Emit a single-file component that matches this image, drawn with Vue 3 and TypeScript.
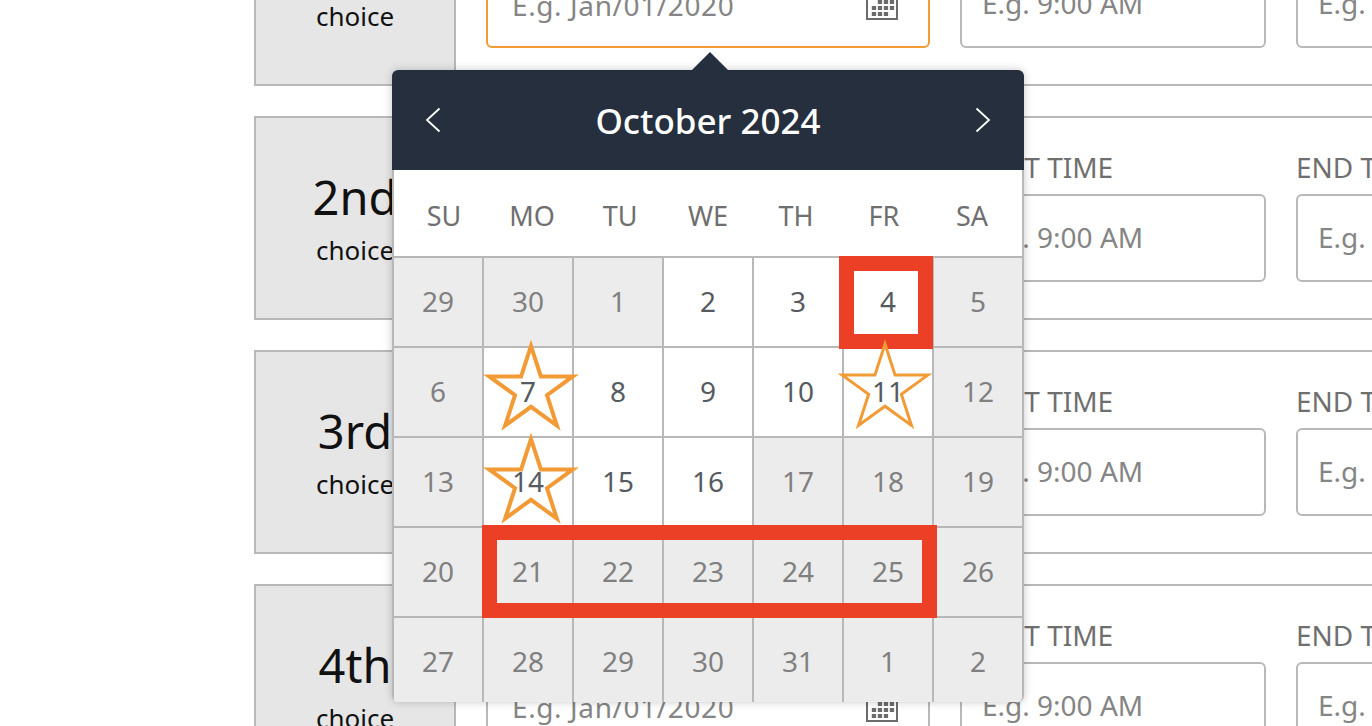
<script setup lang="ts">
interface Choice { rank: string; focused: boolean }
interface Day { n: number; active: boolean }

const choices: Choice[] = [
  { rank: '1st', focused: true },
  { rank: '2nd', focused: false },
  { rank: '3rd', focused: false },
  { rank: '4th', focused: false },
]
const weekdays = ['SU', 'MO', 'TU', 'WE', 'TH', 'FR', 'SA']
const nums = [29, 30, 1, 2, 3, 4, 5, 6, 7, 8, 9, 10, 11, 12, 13, 14, 15, 16, 17, 18, 19, 20, 21, 22, 23, 24, 25, 26, 27, 28, 29, 30, 31, 1, 2]
const activeIdx = new Set([3, 4, 5, 8, 9, 10, 11, 12, 15, 16, 17])
const days: Day[] = nums.map((n, i) => ({ n, active: activeIdx.has(i) }))

function starPoints(cx: number, cy: number, r: number): string {
  const pts: string[] = []
  for (let i = 0; i < 10; i++) {
    const rad = i % 2 === 0 ? r : r * 0.382
    const a = -Math.PI / 2 + (i * Math.PI) / 5
    pts.push(`${(cx + rad * Math.cos(a)).toFixed(2)},${(cy + rad * Math.sin(a)).toFixed(2)}`)
  }
  return pts.join(' ')
}
const stars = [
  { cls: 's7', w: 4, pts: starPoints(50, 50, 44) },
  { cls: 's11', w: 3, pts: starPoints(50, 50, 45) },
  { cls: 's14', w: 4, pts: starPoints(50, 50, 44) },
]
const cal: { x: number; y: number }[] = []
for (let r = 0; r < 3; r++) for (let c = 0; c < 4; c++) {
  if (r === 0 && c === 0) continue
  if (r === 2 && c === 3) continue
  cal.push({ x: 5.8 + c * 6, y: 12 + r * 6 })
}
</script>

<template>
  <div class="page">
    <div class="rows">
      <section v-for="c in choices" :key="c.rank" class="row">
        <div class="rank">
          <div class="rank-num">{{ c.rank }}</div>
          <div class="rank-sub">choice</div>
        </div>
        <div class="fields">
          <div class="field date">
            <div class="label">DATE</div>
            <div class="input date-input" :class="{ focused: c.focused }">
              <span>E.g. Jan/01/2020</span>
              <svg class="cal" width="32" height="32" viewBox="0 0 32 32">
                <path d="M1 4v27h30V4" fill="none" stroke="#6b6b6b" stroke-width="2" />
                <rect x="0" y="0" width="32" height="8" fill="#6b6b6b" />
                <rect v-for="(p, i) in cal" :key="i" :x="p.x" :y="p.y" width="4.3" height="4" fill="#6b6b6b" />
              </svg>
            </div>
          </div>
          <div class="field time">
            <div class="label">START TIME</div>
            <div class="input"><span>E.g. 9:00 AM</span></div>
          </div>
          <div class="field time">
            <div class="label">END TIME</div>
            <div class="input"><span>E.g. 9:00 AM</span></div>
          </div>
        </div>
      </section>
    </div>

    <div class="popup">
      <div class="arrow"></div>
      <header class="head">
        <svg class="chev" width="16" height="26" viewBox="0 0 16 26"><path d="M14.5 1.5 2 13l12.5 11.5" fill="none" stroke="#fff" stroke-width="1.8" /></svg>
        <div class="month">October 2024</div>
        <svg class="chev" width="16" height="26" viewBox="0 0 16 26"><path d="M1.5 1.5 14 13 1.5 24.5" fill="none" stroke="#fff" stroke-width="1.8" /></svg>
      </header>
      <div class="weekdays">
        <div v-for="w in weekdays" :key="w" class="wd">{{ w }}</div>
      </div>
      <div class="grid">
        <div v-for="(d, i) in days" :key="i" class="cell" :class="{ on: d.active }">{{ d.n }}</div>
      </div>
      <div class="mark mark-day"></div>
      <div class="mark mark-week"></div>
      <svg v-for="s in stars" :key="s.cls" class="star" :class="s.cls" width="100" height="100" viewBox="0 0 100 100">
        <polygon :points="s.pts" fill="none" stroke="#f29a35" :stroke-width="s.w" stroke-miterlimit="10" />
      </svg>
    </div>
  </div>
</template>

<style>
html, body { margin: 0; background: #fff; }
</style>

<style scoped>
.page {
  position: relative;
  width: 1372px;
  height: 726px;
  overflow: hidden;
  background: #fff;
  font-family: "Noto Sans", "Liberation Sans", sans-serif;
}
.rows {
  display: flex;
  flex-direction: column;
  gap: 30px;
  margin-top: -118px;
  padding-left: 254px;
  width: 1300px;
}
.row {
  display: flex;
  height: 204px;
  box-sizing: border-box;
  border-top: 2px solid #b8b8b8;
  border-bottom: 2px solid #b8b8b8;
}
.rank {
  box-sizing: border-box;
  flex: none;
  width: 202px;
  margin-top: -2px;
  margin-bottom: -2px;
  background: #e6e6e6;
  border: 2px solid #b8b8b8;
  display: flex;
  flex-direction: column;
  align-items: center;
  padding-top: 46px;
  color: #111;
}
.rank-num { font-size: 47px; line-height: 66px; }
.rank-sub { font-size: 26px; line-height: 36px; margin-top: 2px; }
.fields { display: flex; flex: none; gap: 30px; padding-left: 30px; }
.field { padding-top: 34px; flex: none; }
.date { width: 444px; }
.time { width: 306px; }
.label {
  height: 32px;
  line-height: 30px;
  margin-bottom: 10px;
  font-size: 28px;
  color: #6f6f6f;
  white-space: nowrap;
}
.input {
  box-sizing: border-box;
  height: 88px;
  border: 2px solid #b8b8b8;
  border-radius: 6px;
  padding: 0 30px 0 20px;
  display: flex;
  align-items: center;
  justify-content: space-between;
  font-size: 28px;
  color: #858585;
  white-space: nowrap;
}
.input span { margin-top: -2px; }
.date-input { padding-left: 24px; }
.date-input span { margin-top: 1px; letter-spacing: 0.6px; }
.input.focused { border-color: #f29a35; }
.cal { flex: none; }
.popup {
  position: absolute;
  left: 392px;
  top: 70px;
  width: 632px;
  height: 632px;
  background: #fff;
  border-radius: 6px;
  box-shadow: 0 0 8px rgba(0, 0, 0, 0.22);
}
.arrow {
  position: absolute;
  left: 300px;
  top: -18px;
  width: 0;
  height: 0;
  border-left: 18px solid transparent;
  border-right: 18px solid transparent;
  border-bottom: 18px solid #252f3e;
}
.head {
  height: 100px;
  background: #252f3e;
  border-radius: 6px 6px 0 0;
  display: flex;
  align-items: center;
  justify-content: space-between;
  padding: 0 33px;
  color: #fff;
}
.month { font-size: 35px; font-weight: 500; line-height: 100px; margin-top: 1px; }
.weekdays {
  display: grid;
  grid-template-columns: repeat(7, 88px);
  height: 86px;
  padding: 0 6px;
  border-left: 2px solid #b8b8b8;
  border-right: 2px solid #b8b8b8;
  box-sizing: border-box;
}
.wd {
  text-align: center;
  font-size: 27px;
  line-height: 92px;
  color: #6f6f6f;
}
.grid {
  display: grid;
  grid-template-columns: repeat(7, 90px);
  grid-auto-rows: 90px;
  height: 446px;
  border-right: 2px solid #b8b8b8;
  border-radius: 0 0 6px 6px;
  overflow: hidden;
}
.cell {
  box-sizing: border-box;
  border-left: 2px solid #b8b8b8;
  border-top: 2px solid #b8b8b8;
  background: #ececec;
  color: #808080;
  font-size: 28px;
  display: flex;
  align-items: center;
  justify-content: center;
  padding-bottom: 2px;
}
.cell.on { background: #fff; color: #555b61; }
.mark {
  position: absolute;
  box-sizing: border-box;
  border: 15px solid #ec4026;
}
.mark-day { left: 447px; top: 186px; width: 94px; height: 93px; }
.mark-week { left: 90px; top: 455px; width: 455px; height: 93px; }
.star { position: absolute; }
.s7 { left: 89px; top: 270px; }
.s11 { left: 443px; top: 269px; }
.s14 { left: 89px; top: 363px; }
</style>
